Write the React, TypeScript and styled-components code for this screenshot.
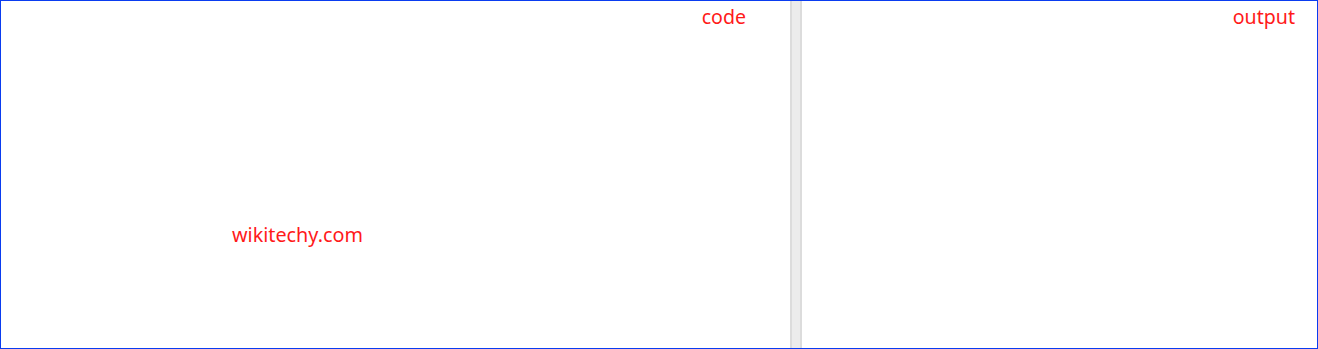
import React from 'react';
import styled, { createGlobalStyle } from 'styled-components';

const GlobalStyle = createGlobalStyle`
  html, body {
    margin: 0;
    padding: 0;
    background: #ffffff;
  }
`;

const Frame = styled.div`
  box-sizing: border-box;
  width: 1318px;
  height: 349px;
  display: flex;
  border: 1px solid #0a3cf0;
  font-family: 'Noto Sans', 'Open Sans', sans-serif;
  background: #fff;
`;

const Panel = styled.section<{ $width?: number; $padRight: number }>`
  box-sizing: border-box;
  display: flex;
  flex-direction: column;
  ${(p) => (p.$width ? `width: ${p.$width}px;` : 'flex: 1;')}
  padding-right: ${(p) => p.$padRight}px;
`;

const Label = styled.div`
  align-self: flex-end;
  color: #ff1a1a;
  font-size: 19.6px;
  line-height: 24px;
  padding-top: 4px;
`;

const Gutter = styled.div`
  box-sizing: border-box;
  width: 12px;
  background: #ececec;
  border-left: 2px solid #dcdcdc;
  border-right: 2px solid #dcdcdc;
`;

const Watermark = styled.div`
  color: #ff1a1a;
  font-size: 19.8px;
  line-height: 24px;
  margin-top: 194px;
  padding-left: 231px;
`;

export default function App() {
  return (
    <>
      <GlobalStyle />
      <Frame>
        <Panel $width={789} $padRight={44}>
          <Label>code</Label>
          <Watermark>wikitechy.com</Watermark>
        </Panel>
        <Gutter />
        <Panel $padRight={22}>
          <Label>output</Label>
        </Panel>
      </Frame>
    </>
  );
}
